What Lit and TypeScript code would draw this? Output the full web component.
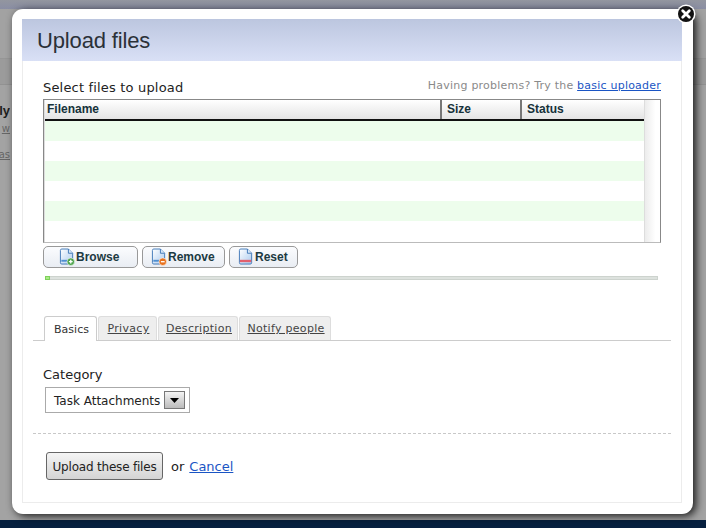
import { LitElement, html, css, svg } from "lit";
import { customElement } from "lit/decorators.js";

const fileIcon = (badge: string) => html`<svg class="ficon" width="16" height="18" viewBox="0 0 17 19">
  <defs><linearGradient id="fg" x1="0" y1="0" x2="1" y2="1"><stop offset="0" stop-color="#ffffff"/><stop offset="1" stop-color="#a9c9ee"/></linearGradient></defs>
  <path d="M1.500 2.500a1.500 1.500 0 0 1 1.500-1.500h7l4.500 4.500v10a1.500 1.500 0 0 1-1.500 1.500h-10a1.500 1.500 0 0 1-1.500-1.500z" fill="url(#fg)" stroke="#3f78b8"/>
  <path d="M10 1v4.500h4.500" fill="#d8e8f8" stroke="#3f78b8"/>
  ${badge === "add" ? svg`<rect x="2.500" y="12.500" width="6.500" height="2" fill="#4f8fd0"/><circle cx="12.500" cy="14.500" r="4" fill="#4aa34a" stroke="#fff" stroke-width=".6"/><path d="M10.500 14.500h4M12.500 12.500v4" stroke="#fff" stroke-width="1.400"/>` : ""}
  ${badge === "remove" ? svg`<rect x="2.500" y="12.500" width="6.500" height="2" fill="#4f8fd0"/><circle cx="12.500" cy="14.500" r="4" fill="#e8711c" stroke="#fff" stroke-width=".6"/><path d="M10.500 14.500h4" stroke="#fff" stroke-width="1.400"/>` : ""}
  ${badge === "reset" ? svg`<rect x="2" y="12.500" width="12" height="2.500" fill="#e2606e"/>` : ""}
</svg>`;

@customElement("app-root")
export class AppRoot extends LitElement {
  static styles = css`
    :host { display: block; width: 706px; height: 528px; position: relative; overflow: hidden; background: #a0a0a0; font-family: "DejaVu Sans", sans-serif; color: #222; }
    .page { display: flex; flex-direction: column; height: 528px; }
    .top { height: 9px; background: linear-gradient(#93969f, #8a8ea4); }
    .band1 { height: 49px; background: #a2a2a2; border-bottom: 1px solid #969696; }
    .band2 { height: 25px; background: #9b9b9b; border-bottom: 1px solid #929292; }
    .main { flex: 1; background: #a3a3a3; padding-top: 18px; }
    .peek { width: 10px; overflow: hidden; display: flex; flex-direction: column; align-items: flex-end; white-space: nowrap; }
    .peek b { font: bold 13px/16px "Liberation Sans", sans-serif; color: #1d1d1d; }
    .peek span { font: 10px/12px "DejaVu Sans", sans-serif; color: #666; text-decoration: underline; margin-top: 4px; }
    .peek span + span { margin-top: 14px; }
    .navy { height: 8px; background: #06203f; }

    .modal { position: absolute; left: 12px; top: 9px; width: 681px; height: 505px; box-sizing: border-box; background: #fff; border-radius: 11px; padding: 10px 11px 11px 10px; box-shadow: 3px 2px 9px rgba(0,0,0,.85); display: flex; }
    .inner { flex: 1; border: 1px solid #ececec; border-top: 0; display: flex; flex-direction: column; min-width: 0; }
    .hdr { height: 42px; box-sizing: border-box; padding: 8px 15px 0; background: linear-gradient(#bcc6df, #d9e0f6); font: 22px/28px "Liberation Sans", sans-serif; letter-spacing: -.15px; color: #2b3138; margin: 0 -1px; }
    .body { padding: 18px 20px 0 20px; display: flex; flex-direction: column; }
    .sel-row { display: flex; justify-content: space-between; align-items: flex-end; height: 20px; }
    .sel-row .l { font-size: 13px; line-height: 18px; letter-spacing: .18px; color: #222; padding-bottom: 2px; }
    .sel-row .r { font-size: 11px; line-height: 18px; letter-spacing: .22px; color: #8a8a8a; padding-bottom: 4px; }
    a { color: #1a55c4; text-decoration: underline; }

    .grid { height: 144px; box-sizing: border-box; border: 1px solid #888; border-bottom-color: #bbb; display: flex; }
    .cols { width: 599px; border-left: 1px solid #ddd; display: flex; flex-direction: column; }
    .head { height: 21px; box-sizing: border-box; border-bottom: 2px solid #111; background: linear-gradient(#fff, #e4e4e4); display: flex; font: bold 12px/18px "Liberation Sans", sans-serif; color: #16323a; }
    .c { box-sizing: border-box; padding-left: 2px; }
    .c1 { width: 395px; }
    .c2 { width: 80px; border-left: 2px solid #777; padding-left: 5px; }
    .c3 { flex: 1; border-left: 2px solid #777; padding-left: 5px; }
    .row { height: 20px; }
    .row.g { background: #edfdec; }
    .sb { flex: 1; background: linear-gradient(90deg, #ececec, #fff 70%); border-left: 1px solid #ddd; }

    .btns { display: flex; gap: 4px; margin-top: 3px; }
    .tb { height: 22px; box-sizing: border-box; border: 1px solid #999; border-radius: 5px; background: linear-gradient(#fbfcfe, #e9edf3); font: bold 12px/20px "Liberation Sans", sans-serif; color: #1c3a42; display: flex; align-items: center; gap: 1px; }
    .tb.b1 { width: 95px; padding-left: 15px; } .tb.b2 { width: 83px; padding-left: 8px; } .tb.b3 { width: 69px; padding-left: 8px; }
    .ficon { flex: none; }
    .progress { height: 4px; margin: 8px 3px 0 2px; background: #dde2de; border: 1px solid #cdd3ce; box-sizing: border-box; position: relative; }
    .tip { position: absolute; left: -1px; top: -1px; width: 5px; height: 4px; background: #a9ec86; border: 1px solid #7fd05c; box-sizing: border-box; }

    .tabs { display: flex; gap: 1px; margin: 36px -10px 0 -10px; padding-left: 11px; height: 24px; border-bottom: 1px solid #ccc; }
    .tab { box-sizing: border-box; height: 24px; padding-left: 2px; background: #eee; border: 1px solid #ddd; border-bottom: 0; border-radius: 3px 3px 0 0; font-size: 11px; letter-spacing: .3px; line-height: 24px; text-align: center; color: #444; text-decoration: underline; }
    .tab.on { background: #fff; height: 25px; text-decoration: none; color: #333; letter-spacing: 0; line-height: 26px; margin-bottom: -1px; border-color: #ccc; }
    .t1 { width: 53px; } .t2 { width: 59px; } .t3 { width: 80px; } .t4 { width: 92px; }

    .cat-label { margin-top: 25px; font-size: 13px; line-height: 18px; color: #222; }
    .select { margin: 3px 0 0 2px; width: 145px; height: 26px; box-sizing: border-box; border: 1px solid #aaa; display: flex; align-items: center; justify-content: space-between; padding: 1px 4px 0 8px; font: 12px "DejaVu Sans", sans-serif; color: #222; }
    .arrow { width: 21px; height: 18px; box-sizing: border-box; margin-top: -1px; border: 1px solid #777; background: linear-gradient(#f4f4f4, #bbb); display: flex; align-items: center; justify-content: center; }
    .arrow svg { display: block; }
    .dash { margin: 20px -10px 0 -10px; border-top: 1px dashed #c8c8c8; }
    .actions { display: flex; align-items: center; margin: 18px 0 0 3px; font-size: 13px; color: #222; }
    .up { width: 117px; height: 28px; box-sizing: border-box; padding-top: 1px; border: 1px solid #666; border-radius: 3px; background: linear-gradient(#f4f4f4, #d4d4d4); font: 12px "DejaVu Sans", sans-serif; letter-spacing: -.2px; color: #222; display: flex; align-items: center; justify-content: center; white-space: nowrap; }
    .or { margin-left: 8px; }
    .actions a { margin-left: 5px; }

    .close { position: absolute; left: 676px; top: 4px; width: 20px; height: 20px; display: block; }
  `;

  render() {
    return html`
      <div class="page">
        <div class="top"></div>
        <div class="band1"></div>
        <div class="band2"></div>
        <div class="main">
          <div class="peek"><b>ly</b><span>w</span><span>as</span></div>
        </div>
        <div class="navy"></div>
      </div>
      <div class="modal">
        <div class="inner">
          <div class="hdr">Upload files</div>
          <div class="body">
            <div class="sel-row">
              <span class="l">Select files to upload</span>
              <span class="r">Having problems? Try the <a>basic uploader</a></span>
            </div>
            <div class="grid">
              <div class="cols">
                <div class="head">
                  <div class="c c1">Filename</div>
                  <div class="c c2">Size</div>
                  <div class="c c3">Status</div>
                </div>
                <div class="row g"></div><div class="row"></div>
                <div class="row g"></div><div class="row"></div>
                <div class="row g"></div><div class="row"></div>
              </div>
              <div class="sb"></div>
            </div>
            <div class="btns">
              <div class="tb b1">${fileIcon("add")}Browse</div>
              <div class="tb b2">${fileIcon("remove")}Remove</div>
              <div class="tb b3">${fileIcon("reset")}Reset</div>
            </div>
            <div class="progress"><div class="tip"></div></div>
            <div class="tabs">
              <div class="tab on t1">Basics</div>
              <div class="tab t2">Privacy</div>
              <div class="tab t3">Description</div>
              <div class="tab t4">Notify people</div>
            </div>
            <div class="cat-label">Category</div>
            <div class="select">Task Attachments
              <span class="arrow"><svg width="9" height="5" viewBox="0 0 9 5"><path d="M0 0h9L4.500 5z" fill="#000"/></svg></span>
            </div>
            <div class="dash"></div>
            <div class="actions">
              <div class="up">Upload these files</div>
              <span class="or">or</span>
              <a>Cancel</a>
            </div>
          </div>
        </div>
      </div>
      <svg class="close" viewBox="0 0 20 20">
        <circle cx="10" cy="10" r="9.500" fill="#fff"/>
        <circle cx="10" cy="10" r="8" fill="#111"/>
        <path d="M6.700 6.700l6.600 6.600M13.300 6.700l-6.600 6.600" stroke="#fff" stroke-width="2.800" stroke-linecap="round"/>
      </svg>
    `;
  }
}
